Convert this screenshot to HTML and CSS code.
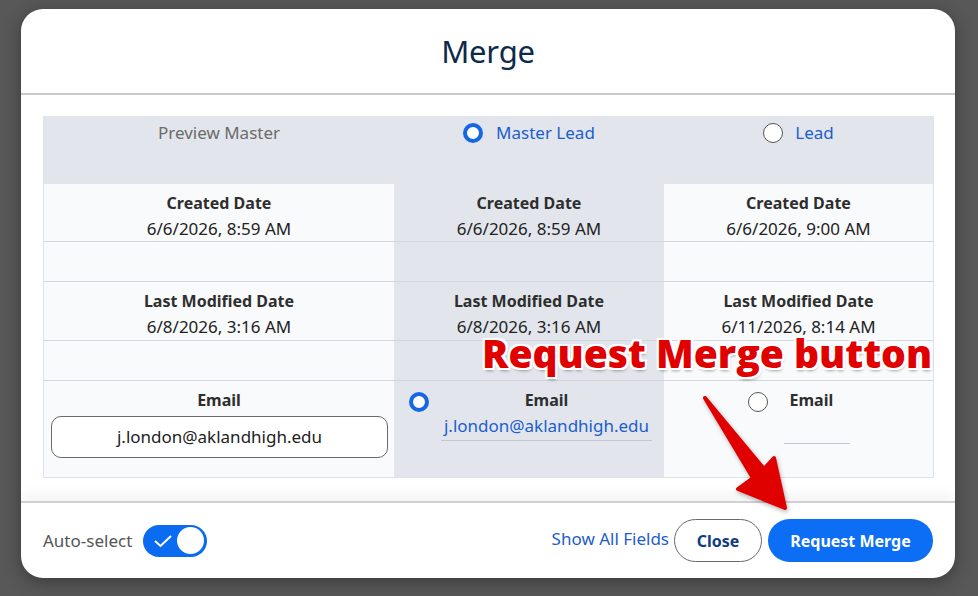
FILE: index.html
```html
<!DOCTYPE html>
<html lang="en">
<head>
    <meta charset="UTF-8">
    <title>Merge</title>
    <link rel="stylesheet" href="styles.css">
</head>
<body>
<div class="modal">
    <div class="modal-head"><h1>Merge</h1></div>
    <div class="modal-body">
        <div class="merge-grid">
            <div class="cell top muted">Preview Master</div>
            <div class="cell top mid"><span class="radio on"></span><span class="link">Master Lead</span></div>
            <div class="cell top mid-no"><span class="radio"></span><span class="link">Lead</span></div>

            <div class="cell field"><b>Created Date</b><span>6/6/2026, 8:59 AM</span></div>
            <div class="cell field grey"><b>Created Date</b><span>6/6/2026, 8:59 AM</span></div>
            <div class="cell field"><b>Created Date</b><span>6/6/2026, 9:00 AM</span></div>

            <div class="cell gap"></div>
            <div class="cell gap grey"></div>
            <div class="cell gap"></div>

            <div class="cell field"><b>Last Modified Date</b><span>6/8/2026, 3:16 AM</span></div>
            <div class="cell field grey"><b>Last Modified Date</b><span>6/8/2026, 3:16 AM</span></div>
            <div class="cell field"><b>Last Modified Date</b><span>6/11/2026, 8:14 AM</span></div>

            <div class="cell gap"></div>
            <div class="cell gap grey"></div>
            <div class="cell gap"></div>

            <div class="cell field email last">
                <b>Email</b>
                <div class="text-box">j.london@aklandhigh.edu</div>
            </div>
            <div class="cell email-pick grey last">
                <span class="radio on"></span>
                <div class="pick-body">
                    <b>Email</b>
                    <span class="link underline">j.london@aklandhigh.edu</span>
                </div>
            </div>
            <div class="cell email-pick right last">
                <span class="radio"></span>
                <div class="pick-body small">
                    <b>Email</b>
                    <span class="empty-line"></span>
                </div>
            </div>
        </div>
    </div>
    <div class="modal-foot">
        <div class="auto">
            <span>Auto-select</span>
            <span class="toggle">
                <svg width="20" height="14" viewBox="0 0 20 14"><path d="M2 7 L7.5 12 L18 2" fill="none" stroke="#fff" stroke-width="2"/></svg>
                <span class="knob"></span>
            </span>
        </div>
        <div class="actions">
            <span class="link">Show All Fields</span>
            <button class="btn ghost">Close</button>
            <button class="btn primary">Request Merge</button>
        </div>
    </div>
</div>

<div class="callout">Request Merge button</div>
<svg class="arrow" width="978" height="596" viewBox="0 0 978 596">
    <polygon points="705,398 764,469 774,458 785,508 738,489 753,478" fill="#e00000" stroke="#e00000" stroke-width="4" stroke-linejoin="round"/>
</svg>
</body>
</html>
```

FILE: styles.css
```css
* {
    margin: 0;
    padding: 0;
    box-sizing: border-box;
}
body {
    background: #585858;
    padding: 9px 23px 18px 21px;
    font-family: "Noto Sans", "Open Sans", sans-serif;
    font-size: 17px;
    color: #222;
}
.modal {
    width: 934px;
    height: 569px;
    background: #fff;
    border-radius: 22px;
    overflow: hidden;
    display: flex;
    flex-direction: column;
    box-shadow: 0 4px 18px rgba(0, 0, 0, 0.35);
}
.modal-head {
    height: 86px;
    border-bottom: 2px solid #c9c9c9;
    display: flex;
    align-items: center;
    justify-content: center;
}
.modal-head h1 {
    font-weight: 400;
    font-size: 31px;
    color: #0d2a4c;
    letter-spacing: -0.2px;
}
.modal-body {
    flex: 1;
    padding: 21px 22px 0;
}
.merge-grid {
    display: grid;
    grid-template-columns: 350px 270px 270px;
    grid-template-rows: 68px 58px 40px 59px 40px 97px;
    border-left: 1px solid #dfe2e7;
}
.cell {
    background: #f9fafb;
    border-bottom: 1px solid #d3d6db;
}
.cell.grey,
.cell.top {
    background: #e2e6ec;
}
.cell:nth-child(3n) {
    border-right: 1px solid #dfe2e7;
}
.cell.top {
    border-bottom: none;
    display: flex;
    justify-content: center;
    align-items: flex-start;
    padding-top: 5px;
    gap: 13px;
    line-height: 24px;
}
.cell.top .radio {
    margin-top: 2px;
}
.cell.top.mid-no {
    gap: 12px;
}
.muted {
    color: #6b6b6b;
}
.link {
    color: #1b5ecc;
}
.radio {
    width: 20px;
    height: 20px;
    border-radius: 50%;
    border: 1px solid #555;
    background: #fff;
    flex-shrink: 0;
    display: inline-block;
}
.radio.on {
    border: 4px solid #1767e4;
}
.cell.field {
    display: flex;
    flex-direction: column;
    align-items: center;
    padding-top: 6px;
    line-height: 26px;
}
.cell.field b,
.pick-body b {
    color: #2e2e2e;
    font-weight: 700;
    font-size: 16px;
}
.cell.last {
    border-bottom: 1px solid #dfe2e7;
}
.text-box {
    align-self: stretch;
    margin: 3px 6px 0 7px;
    height: 42px;
    border: 1px solid #6a6a6a;
    border-radius: 10px;
    background: #fff;
    display: flex;
    align-items: center;
    justify-content: center;
}
.email-pick {
    display: flex;
    align-items: flex-start;
    padding: 6px 0 0 15px;
    line-height: 26px;
}
.email-pick .radio {
    margin-top: 5px;
}
.pick-body {
    flex: 1;
    display: flex;
    flex-direction: column;
    align-items: center;
}
.underline {
    border-bottom: 1px solid #c4c7cc;
    padding: 0 3px 1px;
}
.email-pick.right {
    justify-content: center;
    padding-left: 0;
    gap: 16px;
}
.pick-body.small {
    flex: none;
    width: 66px;
    align-items: flex-start;
}
.pick-body.small b {
    padding-left: 6px;
}
.empty-line {
    width: 66px;
    height: 31px;
    border-bottom: 1px solid #c4c7cc;
}
.modal-foot {
    height: 77px;
    border-top: 2px solid #cfd0d2;
    box-shadow: 0 -8px 10px rgba(0, 0, 0, 0.04);
    display: flex;
    align-items: center;
    justify-content: space-between;
    padding: 0 22px;
}
.auto {
    display: flex;
    align-items: center;
    gap: 11px;
    color: #555;
}
.toggle {
    width: 64px;
    height: 32px;
    border-radius: 16px;
    background: #0b6cf1;
    display: flex;
    align-items: center;
    justify-content: space-between;
    padding: 0 3px 0 10px;
}
.knob {
    width: 27px;
    height: 27px;
    border-radius: 50%;
    background: #fff;
}
.actions {
    display: flex;
    align-items: center;
}
.actions .link {
    margin-right: 5px;
    margin-bottom: 4px;
}
.btn {
    height: 43px;
    border-radius: 22px;
    font-family: "Noto Sans", "Open Sans", sans-serif;
    font-size: 16px;
    font-weight: 700;
}
.btn.ghost {
    width: 88px;
    background: #fff;
    border: 1px solid #6a6a6a;
    color: #0f3d82;
}
.btn.primary {
    width: 165px;
    margin-left: 6px;
    background: #0c6ef4;
    border: none;
    color: #fff;
}
.callout {
    position: absolute;
    left: 482px;
    top: 333px;
    font-family: "Open Sans", sans-serif;
    font-weight: 800;
    font-size: 39px;
    line-height: 1;
    color: #e00000;
    text-shadow: 2px 0 #fff, -2px 0 #fff, 0 2px #fff, 0 -2px #fff,
        2px 2px #fff, -2px -2px #fff, 2px -2px #fff, -2px 2px #fff,
        1px 3px 3px rgba(0, 0, 0, 0.35);
}
.arrow {
    position: absolute;
    left: 0;
    top: 0;
    pointer-events: none;
    filter: drop-shadow(1px 2px 2px rgba(0, 0, 0, 0.3));
}
```
